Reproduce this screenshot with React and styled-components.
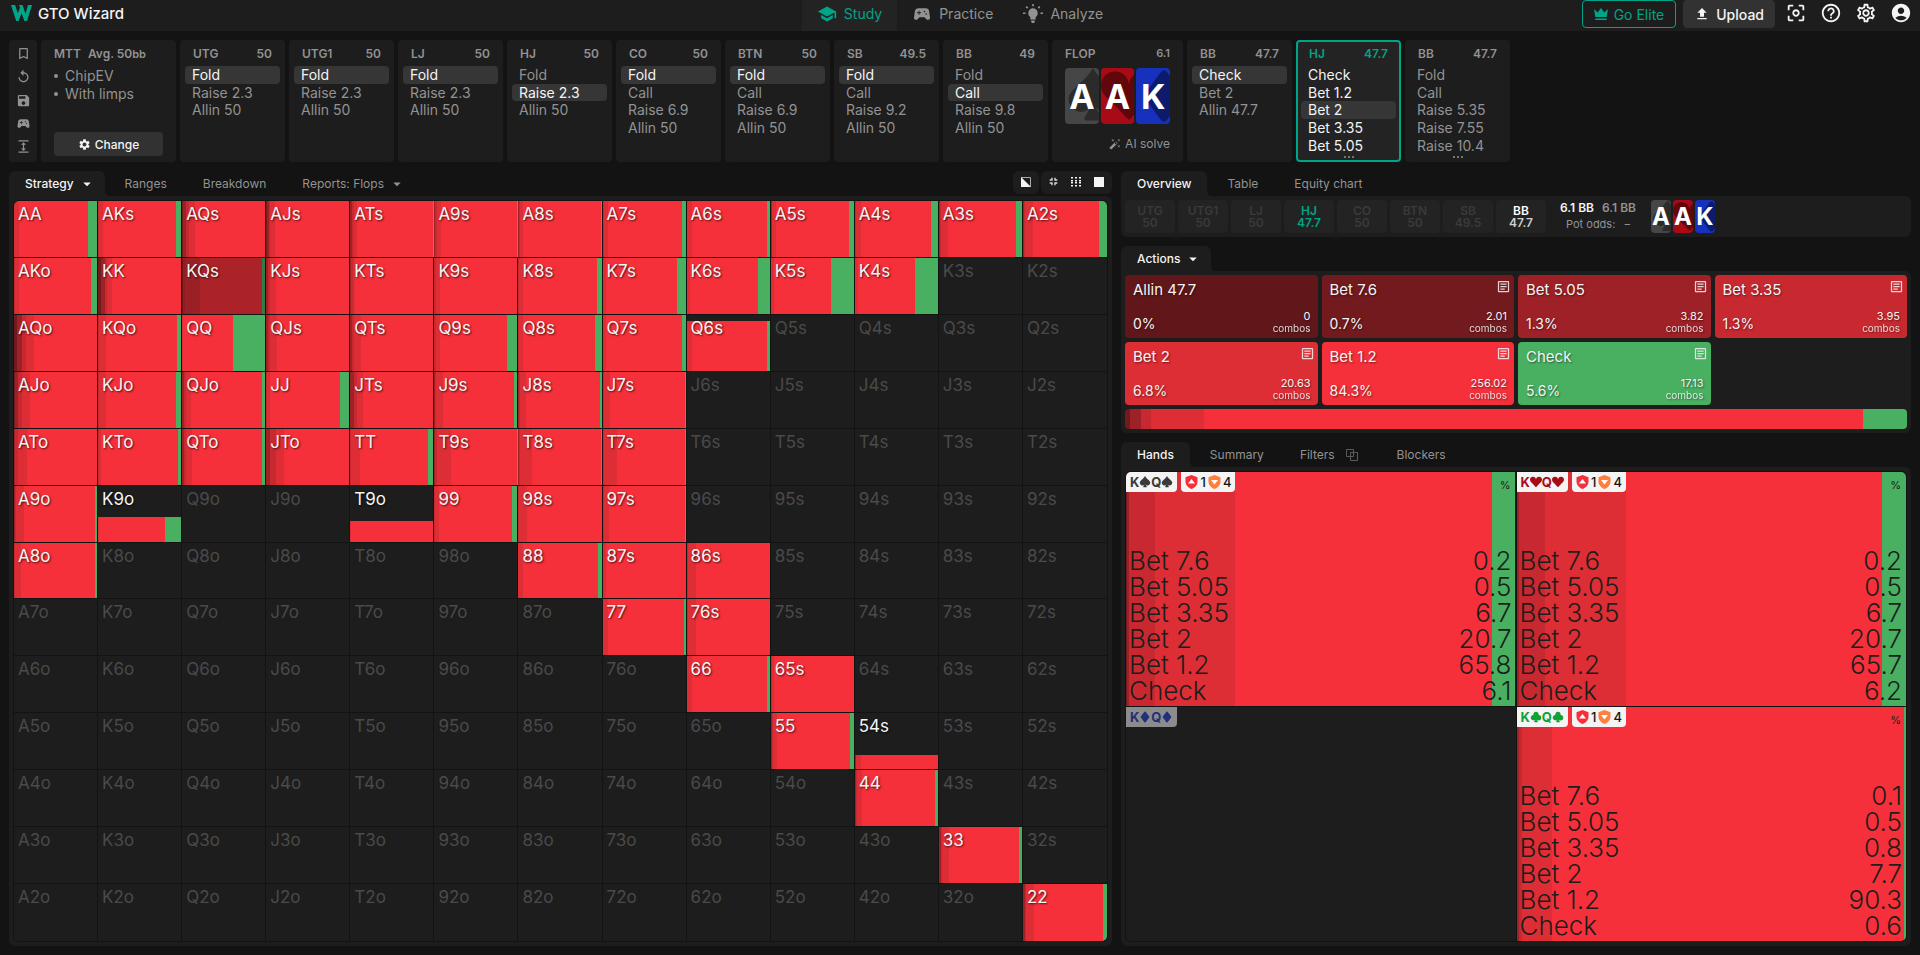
import React from "react";
import styled, { createGlobalStyle, css } from "styled-components";
import {
  MdSchool,
  MdSportsEsports,
  MdBookmarkBorder,
  MdReplay,
  MdSave,
  MdExpand,
  MdSettings,
  MdOutlineSettings,
  MdFileUpload,
  MdCenterFocusWeak,
  MdHelpOutline,
  MdAccountCircle,
  MdArrowDropDown,
  MdOutlineArticle,
  MdAutoFixHigh,
} from "react-icons/md";
import {
  BsSuitSpadeFill,
  BsSuitHeartFill,
  BsSuitDiamondFill,
  BsSuitClubFill,
} from "react-icons/bs";

const c = {
  page: "#131313",
  panel: "#1d1d1d",
  raised: "#232323",
  chip: "#363636",
  text: "#f4f4f4",
  muted: "#929292",
  faint: "#3a3a3a",
  teal: "#00a587",
};

/* Darker red for a larger bet, green for a check. */
const actionColor = {
  allin: "#61171a",
  bet76: "#731a1e",
  bet505: "#9e2127",
  bet335: "#c82931",
  bet2: "#dd2d35",
  bet12: "#f6303a",
  check: "#49b062",
};
const order = ["bet76", "bet505", "bet335", "bet2", "bet12", "check"];

const GlobalStyle = createGlobalStyle`
  *, *::before, *::after { box-sizing: border-box; }
  body {
    margin: 0;
    background: ${c.page};
    color: ${c.text};
    font-family: Inter, "Liberation Sans", sans-serif;
    font-size: 12px;
  }
  button {
    margin: 0;
    padding: 0;
    border: 0;
    background: none;
    color: inherit;
    font: inherit;
    text-align: left;
    cursor: pointer;
  }
  svg { display: block; flex: none; }
`;

const Page = styled.div`
  min-height: 100vh;
  display: flex;
  flex-direction: column;
`;

/* ---------- top bar ---------- */

const TopBar = styled.header`
  height: 31px;
  flex: none;
  display: grid;
  grid-template-columns: 1fr auto 1fr;
  background: ${c.panel};
`;

const Brand = styled.a`
  display: flex;
  align-items: center;
  gap: 6px;
  padding: 0 11px 5px;
  color: ${c.text};
  text-decoration: none;
  font-size: 15px;
  font-weight: 500;
`;

const MainNav = styled.nav`
  display: flex;
`;

const NavLink = styled.a`
  display: flex;
  align-items: center;
  gap: 7px;
  padding: 0 15px 4px;
  color: ${(p) => (p.$active ? c.teal : c.muted)};
  background: ${(p) => (p.$active ? c.raised : "transparent")};
  text-decoration: none;
  font-size: 14px;
  svg { width: 20px; height: 20px; }
`;

const Tools = styled.div`
  display: flex;
  justify-content: flex-end;
  gap: 7px;
  padding-right: 8px;
`;

const TopButton = styled.button`
  height: 28px;
  display: flex;
  align-items: center;
  gap: 6px;
  padding: 0 ${(p) => (p.$outline ? 11 : 10)}px;
  border: 1px solid ${(p) => (p.$outline ? c.teal : "#323232")};
  border-radius: 4px;
  background: ${(p) => (p.$outline ? "transparent" : "#323232")};
  color: ${(p) => (p.$outline ? c.teal : c.text)};
  font-size: 14px;
  font-weight: ${(p) => (p.$outline ? 400 : 500)};
`;

const IconRow = styled.div`
  display: flex;
  align-items: center;
  gap: 13px;
  height: 26px;
  padding-left: 3px;
  svg { width: 22px; height: 22px; }
`;

/* ---------- action history ---------- */

const Body = styled.main`
  flex: 1;
  display: flex;
  flex-direction: column;
  gap: 9px;
  padding: 9px;
`;

const History = styled.div`
  display: flex;
  gap: 4px;
  height: 122px;
`;

const SideTools = styled.div`
  width: 28px;
  display: flex;
  flex-direction: column;
  align-items: center;
  justify-content: space-between;
  padding: 6px 0 8px;
  border-radius: 4px;
  background: ${c.panel};
  color: ${c.muted};
  svg { width: 15px; height: 15px; }
`;

const GameCard = styled.section`
  width: 135px;
  display: flex;
  flex-direction: column;
  padding: 2px 13px 6px;
  border-radius: 4px;
  background: ${c.panel};
  color: ${c.muted};
`;

const CardHead = styled.div`
  height: 24px;
  display: flex;
  align-items: center;
  justify-content: space-between;
  padding: 0 8px 2px;
  font-weight: 600;
`;

const GameHead = styled(CardHead)`
  justify-content: flex-start;
  gap: 7px;
  padding: 0 0 2px;
  small { font-size: 11px; }
`;

const GameFacts = styled.ul`
  margin: 0;
  padding: 1px 0 0;
  list-style: none;
  font-size: 14px;
  line-height: 18px;
  li { display: flex; align-items: center; gap: 7px; }
  li::before {
    content: "";
    width: 4px;
    height: 4px;
    border-radius: 50%;
    background: currentColor;
  }
`;

const ChangeButton = styled.button`
  height: 24px;
  display: flex;
  align-items: center;
  justify-content: center;
  gap: 4px;
  margin-top: auto;
  border-radius: 4px;
  background: #323232;
  color: ${c.text};
  font-weight: 500;
`;

const NodeCard = styled.section`
  width: 105px;
  display: flex;
  flex-direction: column;
  padding: 0 3px;
  border: 2px solid ${(p) => (p.$active ? c.teal : c.panel)};
  border-radius: 4px;
  background: ${(p) => (p.$active ? c.raised : c.panel)};
  color: ${(p) => (p.$active ? c.text : c.muted)};
  ${CardHead} { color: ${(p) => (p.$active ? c.teal : c.muted)}; }
`;

const ActionList = styled.div`
  height: 88px;
  display: grid;
  grid-template-rows: repeat(5, 1fr);
`;

const ActionButton = styled.button`
  padding: 0 7px;
  border-radius: 4px;
  font-size: 14px;
  line-height: 17px;
  ${(p) => p.$chosen && css`
    background: ${c.chip};
    color: ${c.text};
  `}
`;

const More = styled.div`
  align-self: center;
  display: flex;
  gap: 2px;
  padding-top: 2px;
  i { width: 2px; height: 2px; border-radius: 1px; background: ${c.muted}; }
`;

const FlopCard = styled.section`
  width: 131px;
  display: flex;
  flex-direction: column;
  padding: 2px 13px 0;
  border-radius: 4px;
  background: ${c.panel};
  color: ${c.muted};
  ${CardHead} { padding: 0 0 2px; margin-bottom: 2px; }
  ${CardHead} small { font-size: 11px; }
`;

const Cards = styled.div`
  display: flex;
  gap: 2px;
`;

const cardBack = { s: "#464646", h: "#a80b15", d: "#1631bd" };
const cardSuit = { s: "#2b2b2b", h: "#61060b", d: "#0d1b6c" };

const PlayingCard = styled.div`
  position: relative;
  overflow: hidden;
  display: flex;
  align-items: center;
  justify-content: center;
  width: ${(p) => (p.$small ? 20 : 34)}px;
  height: ${(p) => (p.$small ? 33 : 56)}px;
  border-radius: 4px;
  background: ${(p) => cardBack[p.$suit]};
  font-size: ${(p) => (p.$small ? 24 : 34)}px;
  font-weight: 700;
  color: #fff;
  svg {
    position: absolute;
    top: 0;
    left: 0;
    width: auto;
    height: 100%;
    color: ${(p) => cardSuit[p.$suit]};
  }
  span { position: relative; }
`;

const SolveButton = styled.button`
  display: flex;
  align-items: center;
  justify-content: flex-end;
  gap: 4px;
  margin-top: 12px;
`;

/* ---------- panels ---------- */

const Columns = styled.div`
  flex: 1;
  display: grid;
  grid-template-columns: minmax(0, 1103fr) minmax(0, 790fr);
  gap: 9px;
`;

const Column = styled.div`
  display: flex;
  flex-direction: column;
  gap: 9px;
`;

const Section = styled.section`
  display: flex;
  flex-direction: column;
  flex: ${(p) => (p.$grow ? 1 : "none")};
`;

const TabRow = styled.div`
  display: flex;
  gap: 4px;
`;

const Tab = styled.button`
  position: relative;
  height: 25px;
  display: flex;
  align-items: center;
  gap: ${(p) => (p.$menu ? 4 : 11)}px;
  padding: 0 ${(p) => (p.$menu ? 9 : 16)}px 0 16px;
  border-radius: 6px 6px 0 0;
  font-weight: 400;
  color: ${c.muted};
  ${(p) => p.$active && css`
    background: ${c.panel};
    color: ${c.text};
    font-weight: 500;
    &::after {
      content: "";
      position: absolute;
      left: 100%;
      bottom: 0;
      width: 5px;
      height: 5px;
      background: radial-gradient(circle at 100% 0, transparent 5px, ${c.panel} 5px);
    }
  `}
`;

const Panel = styled.div`
  padding: 4px;
  border-radius: 0 6px 6px 6px;
  background: ${c.panel};
  ${(p) => p.$grow && css`
    flex: 1;
    display: flex;
    flex-direction: column;
  `}
`;

const ViewTools = styled.div`
  display: flex;
  align-items: flex-start;
  gap: 2px;
  margin-left: auto;
`;

const ViewGroup = styled.div`
  height: 23px;
  display: flex;
  align-items: center;
  gap: 13px;
  padding: 0 8px 2px;
  border-radius: 6px;
  background: ${c.panel};
`;

/* ---------- hand matrix ---------- */

const Matrix = styled.div`
  flex: 1;
  display: grid;
  grid-template-columns: repeat(13, minmax(0, 1fr));
  grid-template-rows: repeat(13, minmax(40px, 1fr));
  overflow: hidden;
  border: 1px solid ${c.page};
  border-radius: 6px;
`;

const Cell = styled.button`
  position: relative;
  display: flex;
  align-items: flex-start;
  padding: 3px 4px;
  border: solid ${c.page};
  border-width: 0 1px 1px 0;
  color: ${(p) => (p.$live ? c.text : "#4a4a4a")};
  font-size: 17px;
  line-height: 21px;
  text-shadow: ${(p) => (p.$live ? "1px 1px 2px rgba(0, 0, 0, 0.7)" : "none")};
  &:nth-child(13n) { border-right-width: 0; }
  &:nth-child(n + 157) { border-bottom-width: 0; }
  span { position: relative; }
`;

const Mix = styled.div`
  position: absolute;
  left: 0;
  right: 0;
  bottom: 0;
  display: flex;
  filter: ${(p) => (p.$dim ? "brightness(0.7)" : "none")};
`;

const Slice = styled.div`
  background: ${(p) => actionColor[p.$kind]};
`;

/* ---------- right column ---------- */

const Seats = styled(Panel)`
  display: flex;
  align-items: center;
  gap: 3px;
`;

const seatColor = { out: c.faint, hero: c.teal, villain: "#d0d0d0" };

const Seat = styled.button`
  width: 50px;
  height: 33px;
  border-radius: 4px;
  background: ${c.raised};
  color: ${(p) => seatColor[p.$state]};
  font-weight: 600;
  line-height: 12px;
  text-align: center;
  b {
    display: block;
    font-weight: 600;
    color: ${(p) => (p.$state === "villain" ? "#fff" : "inherit")};
  }
`;

const Pot = styled.div`
  padding: 0 12px 1px 11px;
  color: ${c.muted};
  text-align: center;
  line-height: 16px;
  b { font-weight: 600; color: ${c.text}; margin-right: 8px; }
  strong { font-weight: 600; }
  div { font-size: 11px; }
  div span { margin-left: 6px; }
`;

const ActionGrid = styled.div`
  display: grid;
  grid-template-columns: repeat(4, 1fr);
  gap: 4px;
  margin-bottom: 4px;
`;

const ActionCard = styled.button`
  height: 63px;
  display: grid;
  grid-template-columns: 1fr auto;
  align-content: space-between;
  padding: 5px 7px 4px 8px;
  border-radius: 4px;
  background: ${(p) => actionColor[p.$kind]};
  text-shadow: 1px 1px 2px rgba(0, 0, 0, 0.5);
  font-size: 15px;
  line-height: 20px;
  svg {
    width: 15px;
    height: 15px;
    margin: -1px -4px 0 auto;
    opacity: 0.85;
  }
`;

const Share = styled.span`
  align-self: end;
  font-size: 14px;
`;

const Combos = styled.span`
  font-size: 11px;
  line-height: 12px;
  text-align: right;
  small { display: block; font-size: 10px; opacity: 0.85; }
`;

const TotalBar = styled.div`
  height: 20px;
  display: flex;
  overflow: hidden;
  border-radius: 4px;
`;

const Hands = styled.div`
  flex: 1;
  display: grid;
  grid-template-columns: 1fr 1fr;
  grid-template-rows: 1fr 1fr;
  gap: 1px;
  overflow: hidden;
  border: 1px solid ${c.page};
  border-radius: 6px;
  background: ${c.page};
`;

const Hand = styled.article`
  position: relative;
  display: flex;
  flex-direction: column;
  justify-content: space-between;
  padding-bottom: 2px;
  background: ${c.panel};
`;

const HandHead = styled.div`
  position: relative;
  display: flex;
  gap: 4px;
`;

const suitInk = { s: "#3a3a3a", h: "#a80b15", d: "#22307a", c: "#0da136" };

const Tag = styled.div`
  height: 20px;
  display: flex;
  align-items: center;
  gap: ${(p) => (p.$suit ? 0 : 2)}px;
  padding: 0 4px;
  border-radius: 0 0 4px ${(p) => (p.$both ? 4 : 0)}px;
  background: ${(p) => (p.$off ? "#8c8c8c" : c.text)};
  color: ${(p) => (p.$suit ? suitInk[p.$suit] : "#131313")};
  font-size: 13px;
  font-weight: ${(p) => (p.$suit ? 700 : 500)};
`;

const Unit = styled.span`
  margin-left: auto;
  padding: 6px 5px 0 0;
  font-size: 11px;
  color: ${c.panel};
`;

const Breakdown = styled.table`
  position: relative;
  width: 100%;
  border-collapse: collapse;
  color: ${c.panel};
  font-size: 26px;
  line-height: 26px;
  th, td { padding: 0 3px; font-weight: 300; text-align: left; }
  td { padding-right: 4px; text-align: right; }
`;

/* ---------- drawings ---------- */

const Logo = () => (
  <svg width="21" height="16" viewBox="0 0 21 16" fill={c.teal} aria-hidden="true">
    <path d="M0 0h4.200l2.600 8.500L9 2.500 7.900 0h3.600l3 8.700L17 0h4l-5 16h-2.600L10.600 8.200 7.600 16H5.200z" />
  </svg>
);

const Crown = () => (
  <svg width="14" height="13" viewBox="0 0 14 13" fill="currentColor" aria-hidden="true">
    <path d="M0 1l3.700 3.400L7 0l3.300 4.400L14 1l-1.300 8H1.300zM1.300 10.500h11.400V12H1.300z" />
  </svg>
);

const Bulb = () => (
  <svg viewBox="0 0 20 20" fill="currentColor" aria-hidden="true">
    <path d="M10 4.300a4.800 4.800 0 0 0-2.700 8.700v2.500h5.400V13A4.800 4.800 0 0 0 10 4.300zM8.200 16.600h3.600v1.300L11 19H9l-.8-1.100z" />
    <path d="M10 0v2.200M0 9.300h2.500M17.500 9.300H20M3.200 2.600l1.500 1.500M16.800 2.600l-1.500 1.500" stroke="currentColor" strokeWidth="1.600" />
  </svg>
);

const HalfSquare = () => (
  <svg width="10" height="10" viewBox="0 0 10 10" aria-hidden="true">
    <path d="M.5.5h9v9h-9z" fill="none" stroke="#aaa" />
    <path d="M0 0l10 10H0z" fill="#f4f4f4" />
  </svg>
);

const Shrink = () => (
  <svg width="9" height="9" viewBox="0 0 9 9" fill="none" stroke="#d8d8d8" strokeWidth="1.400" aria-hidden="true">
    <path d="M3 .7V3H.7M6 .7V3h2.300M3 8.300V6H.7M6 8.300V6h2.300" />
  </svg>
);

const Dots = () => (
  <svg width="10" height="10" viewBox="0 0 10 10" fill="#f4f4f4" aria-hidden="true">
    {[0, 4, 8].map((x) => [0, 3, 5, 8].map((y) => <rect key={`${x}-${y}`} x={x} y={y} width="2" height="1.500" />))}
  </svg>
);

const Square = () => (
  <svg width="10" height="10" viewBox="0 0 10 10" fill="#f4f4f4" aria-hidden="true">
    <rect width="10" height="10" />
  </svg>
);

const Overlap = () => (
  <svg width="15" height="12" viewBox="0 0 15 12" fill="none" stroke="#5a5a5a" aria-hidden="true">
    <path d="M.5.500h7v7h-7zM4.500 3.500h7v8h-7z" />
  </svg>
);

const Shield = ({ color, up }) => (
  <svg width="13" height="14" viewBox="0 0 13 14" aria-hidden="true">
    <path d="M6.500 0L12.500 2.200V6.500c0 3.500-2.500 6.200-6 7.500C3 12.700.5 10 .5 6.500V2.200z" fill={color} />
    <path d={up ? "M6.500 4l3.500 4.500H3z" : "M6.500 9.500L3 5h7z"} fill="#fff" />
  </svg>
);

const suitIcon = {
  s: BsSuitSpadeFill,
  h: BsSuitHeartFill,
  d: BsSuitDiamondFill,
  c: BsSuitClubFill,
};

const flop = [["A", "s"], ["A", "h"], ["K", "d"]];

function Board({ small }) {
  return (
    <Cards>
      {flop.map(([rank, suit]) => {
        const Icon = suitIcon[suit];
        return (
          <PlayingCard key={rank + suit} $suit={suit} $small={small}>
            <Icon />
            <span>{rank}</span>
          </PlayingCard>
        );
      })}
    </Cards>
  );
}

/* ---------- data ---------- */

const preflop = [
  ["UTG", "50", ["Fold", "Raise 2.3", "Allin 50"], 0],
  ["UTG1", "50", ["Fold", "Raise 2.3", "Allin 50"], 0],
  ["LJ", "50", ["Fold", "Raise 2.3", "Allin 50"], 0],
  ["HJ", "50", ["Fold", "Raise 2.3", "Allin 50"], 1],
  ["CO", "50", ["Fold", "Call", "Raise 6.9", "Allin 50"], 0],
  ["BTN", "50", ["Fold", "Call", "Raise 6.9", "Allin 50"], 0],
  ["SB", "49.5", ["Fold", "Call", "Raise 9.2", "Allin 50"], 0],
  ["BB", "49", ["Fold", "Call", "Raise 9.8", "Allin 50"], 1],
];

const postflop = [
  ["BB", "47.7", ["Check", "Bet 2", "Allin 47.7"], 0],
  ["HJ", "47.7", ["Check", "Bet 1.2", "Bet 2", "Bet 3.35", "Bet 5.05"], 2, true, true],
  ["BB", "47.7", ["Fold", "Call", "Raise 5.35", "Raise 7.55", "Raise 10.4"], -1, false, true],
];

/* hand: [bet 7.6, bet 5.05, bet 3.35, bet 2, check, share of combos in range] in percent */
const strategy = {
  AA: [0, 0, 0, 6, 11], AKs: [0, 0, 1, 5, 6], AQs: [1, 4, 3, 7, 0], AJs: [1, 2, 2, 6, 0],
  ATs: [0, 2, 2, 4, 1], A9s: [0, 1, 2, 5, 1], A8s: [0, 1, 1, 4, 1], A7s: [0, 1, 1, 5, 4],
  A6s: [0, 0, 1, 5, 3], A5s: [0, 1, 1, 4, 6], A4s: [0, 0, 1, 6, 8], A3s: [0, 1, 1, 9, 7],
  A2s: [0, 1, 1, 10, 10],
  AKo: [0, 0, 1, 5, 7], KK: [3, 5, 3, 6, 0], KQs: [0, 1, 3, 17, 4], KJs: [0, 2, 3, 7, 0],
  KTs: [0, 1, 2, 3, 0], K9s: [0, 0, 2, 5, 0], K8s: [0, 0, 1, 4, 5], K7s: [0, 0, 1, 3, 10],
  K6s: [0, 0, 1, 3, 14], K5s: [0, 0, 0, 4, 27], K4s: [0, 0, 0, 4, 27],
  AQo: [4, 6, 5, 9, 0], KQo: [0, 0, 1, 9, 5], QQ: [0, 0, 0, 1, 39], QJs: [0, 2, 3, 8, 0],
  QTs: [0, 2, 3, 8, 0], Q9s: [0, 0, 2, 5, 13], Q8s: [0, 0, 1, 4, 8], Q7s: [0, 0, 1, 3, 4],
  Q6s: [0, 0, 1, 6, 3, 89],
  AJo: [1, 4, 5, 9, 0], KJo: [0, 0, 1, 9, 6], QJo: [0, 2, 3, 6, 4], JJ: [0, 0, 1, 3, 11],
  JTs: [0, 4, 4, 7, 0], J9s: [0, 1, 1, 8, 4], J8s: [0, 1, 1, 7, 2], J7s: [0, 1, 1, 7, 1],
  ATo: [0, 1, 4, 11, 0], KTo: [0, 0, 1, 3, 4], QTo: [0, 2, 3, 7, 4], JTo: [0, 5, 7, 10, 0],
  TT: [0, 0, 1, 11, 6], T9s: [0, 1, 2, 17, 1], T8s: [0, 1, 1, 14, 1], T7s: [0, 1, 1, 15, 1],
  A9o: [0, 1, 1, 10, 2], K9o: [0, 0, 0, 1, 20, 44], T9o: [0, 0, 0, 1, 0, 37],
  99: [0, 0, 1, 5, 6], "98s": [0, 0, 1, 9, 0], "97s": [0, 1, 1, 6, 1],
  A8o: [0, 0, 1, 8, 3], 88: [0, 0, 0, 5, 4], "87s": [0, 0, 1, 3, 0], "86s": [0, 1, 1, 9, 0],
  77: [0, 0, 0, 6, 2], "76s": [0, 1, 1, 9, 0], 66: [0, 0, 1, 6, 3], "65s": [0, 0, 1, 3, 0],
  55: [0, 1, 2, 5, 5], "54s": [0, 1, 0, 6, 0, 25], 44: [0, 1, 2, 6, 4],
  33: [0, 2, 2, 8, 4], 22: [0, 2, 2, 9, 5],
};

const ranks = "AKQJT98765432".split("");
const matrixHands = ranks.flatMap((row, r) =>
  ranks.map((col, k) => (r === k ? row + col : r < k ? `${row}${col}s` : `${col}${row}o`))
);

const seats = [
  ["UTG", "50", "out"], ["UTG1", "50", "out"], ["LJ", "50", "out"], ["HJ", "47.7", "hero"],
  ["CO", "50", "out"], ["BTN", "50", "out"], ["SB", "49.5", "out"], ["BB", "47.7", "villain"],
];

const totals = [
  ["Allin 47.7", "allin", "0%", "0", false],
  ["Bet 7.6", "bet76", "0.7%", "2.01", true],
  ["Bet 5.05", "bet505", "1.3%", "3.82", true],
  ["Bet 3.35", "bet335", "1.3%", "3.95", true],
  ["Bet 2", "bet2", "6.8%", "20.63", true],
  ["Bet 1.2", "bet12", "84.3%", "256.02", true],
  ["Check", "check", "5.6%", "17.13", true],
];

const betNames = ["Bet 7.6", "Bet 5.05", "Bet 3.35", "Bet 2", "Bet 1.2", "Check"];
const combos = [
  ["s", ["0.2", "0.5", "6.7", "20.7", "65.8", "6.1"]],
  ["h", ["0.2", "0.5", "6.7", "20.7", "65.7", "6.2"]],
  ["d", null],
  ["c", ["0.1", "0.5", "0.8", "7.7", "90.3", "0.6"]],
];

/* ---------- parts ---------- */

function Slices({ values }) {
  return order.map((kind, i) => <Slice key={kind} $kind={kind} style={{ width: `${values[i]}%` }} />);
}

function HandCell({ name }) {
  const data = strategy[name];
  if (!data) return <Cell><span>{name}</span></Cell>;
  const [a, b, d, e, check, height = 100] = data;
  return (
    <Cell $live>
      <Mix $dim={name === "KQs"} style={{ height: `${height}%` }}>
        <Slices values={[a, b, d, e, 100 - a - b - d - e - check, check]} />
      </Mix>
      <span>{name}</span>
    </Cell>
  );
}

function Node({ data: [seat, stack, actions, chosen, active, more] }) {
  return (
    <NodeCard $active={active}>
      <CardHead><span>{seat}</span><span>{stack}</span></CardHead>
      <ActionList>
        {actions.map((name, i) => (
          <ActionButton key={name} $chosen={i === chosen}>{name}</ActionButton>
        ))}
      </ActionList>
      {more && <More><i /><i /><i /></More>}
    </NodeCard>
  );
}

function ComboCard({ suit, values }) {
  const Icon = suitIcon[suit];
  return (
    <Hand>
      {values && <Mix style={{ height: "100%" }}><Slices values={values} /></Mix>}
      <HandHead>
        <Tag $suit={suit} $off={!values}>
          <span>K</span><Icon size={12} /><span>Q</span><Icon size={12} />
        </Tag>
        {values && (
          <>
            <Tag $both>
              <Shield color="#f6303a" up /><span>1</span>
              <Shield color="#ff7f3f" /><span>4</span>
            </Tag>
            <Unit>%</Unit>
          </>
        )}
      </HandHead>
      {values && (
        <Breakdown>
          <tbody>
            {betNames.map((name, i) => (
              <tr key={name}><th scope="row">{name}</th><td>{values[i]}</td></tr>
            ))}
          </tbody>
        </Breakdown>
      )}
    </Hand>
  );
}

export default function App() {
  return (
    <Page>
      <GlobalStyle />
      <TopBar>
        <Brand href="#"><Logo />GTO Wizard</Brand>
        <MainNav>
          <NavLink href="#study" $active><MdSchool />Study</NavLink>
          <NavLink href="#practice"><MdSportsEsports />Practice</NavLink>
          <NavLink href="#analyze"><Bulb />Analyze</NavLink>
        </MainNav>
        <Tools>
          <TopButton $outline><Crown />Go Elite</TopButton>
          <TopButton><MdFileUpload size={16} />Upload</TopButton>
          <IconRow>
            <button aria-label="Focus"><MdCenterFocusWeak /></button>
            <button aria-label="Help"><MdHelpOutline /></button>
            <button aria-label="Settings"><MdOutlineSettings /></button>
            <button aria-label="Account"><MdAccountCircle /></button>
          </IconRow>
        </Tools>
      </TopBar>

      <Body>
        <History>
          <SideTools>
            <button aria-label="Bookmark"><MdBookmarkBorder /></button>
            <button aria-label="Reset"><MdReplay /></button>
            <button aria-label="Save"><MdSave /></button>
            <button aria-label="Play"><MdSportsEsports /></button>
            <button aria-label="Expand"><MdExpand /></button>
          </SideTools>
          <GameCard>
            <GameHead><span>MTT</span><span>Avg. 50<small>bb</small></span></GameHead>
            <GameFacts><li>ChipEV</li><li>With limps</li></GameFacts>
            <ChangeButton><MdSettings size={13} />Change</ChangeButton>
          </GameCard>
          {preflop.map((node) => <Node key={node[0]} data={node} />)}
          <FlopCard>
            <CardHead><span>FLOP</span><small>6.1</small></CardHead>
            <Board />
            <SolveButton><MdAutoFixHigh size={12} />AI solve</SolveButton>
          </FlopCard>
          {postflop.map((node, i) => <Node key={i} data={node} />)}
        </History>

        <Columns>
          <Section $grow>
            <TabRow>
              <Tab $active $menu>Strategy<MdArrowDropDown size={18} /></Tab>
              <Tab>Ranges</Tab>
              <Tab>Breakdown</Tab>
              <Tab $menu>Reports: Flops<MdArrowDropDown size={18} /></Tab>
              <ViewTools>
                <ViewGroup><button aria-label="Split view"><HalfSquare /></button></ViewGroup>
                <ViewGroup>
                  <button aria-label="Compact"><Shrink /></button>
                  <button aria-label="Grid"><Dots /></button>
                  <button aria-label="Full"><Square /></button>
                </ViewGroup>
              </ViewTools>
            </TabRow>
            <Panel $grow>
              <Matrix>
                {matrixHands.map((name) => <HandCell key={name} name={name} />)}
              </Matrix>
            </Panel>
          </Section>

          <Column>
            <Section>
              <TabRow>
                <Tab $active>Overview</Tab>
                <Tab>Table</Tab>
                <Tab>Equity chart</Tab>
              </TabRow>
              <Seats>
                {seats.map(([name, stack, state]) => (
                  <Seat key={name} $state={state}><b>{name}</b>{stack}</Seat>
                ))}
                <Pot>
                  <b>6.1 BB</b><strong>6.1 BB</strong>
                  <div>Pot odds: <span>–</span></div>
                </Pot>
                <Board small />
              </Seats>
            </Section>

            <Section>
              <TabRow><Tab $active $menu>Actions<MdArrowDropDown size={18} /></Tab></TabRow>
              <Panel>
                <ActionGrid>
                  {totals.map(([name, kind, share, count, note]) => (
                    <ActionCard key={name} $kind={kind}>
                      <span>{name}</span>
                      <span>{note && <MdOutlineArticle />}</span>
                      <Share>{share}</Share>
                      <Combos>{count}<small>combos</small></Combos>
                    </ActionCard>
                  ))}
                </ActionGrid>
                <TotalBar>
                  <Slices values={[0.7, 1.3, 1.3, 6.8, 84.3, 5.6]} />
                </TotalBar>
              </Panel>
            </Section>

            <Section $grow>
              <TabRow>
                <Tab $active>Hands</Tab>
                <Tab>Summary</Tab>
                <Tab>Filters<Overlap /></Tab>
                <Tab>Blockers</Tab>
              </TabRow>
              <Panel $grow>
                <Hands>
                  {combos.map(([suit, values]) => <ComboCard key={suit} suit={suit} values={values} />)}
                </Hands>
              </Panel>
            </Section>
          </Column>
        </Columns>
      </Body>
    </Page>
  );
}
